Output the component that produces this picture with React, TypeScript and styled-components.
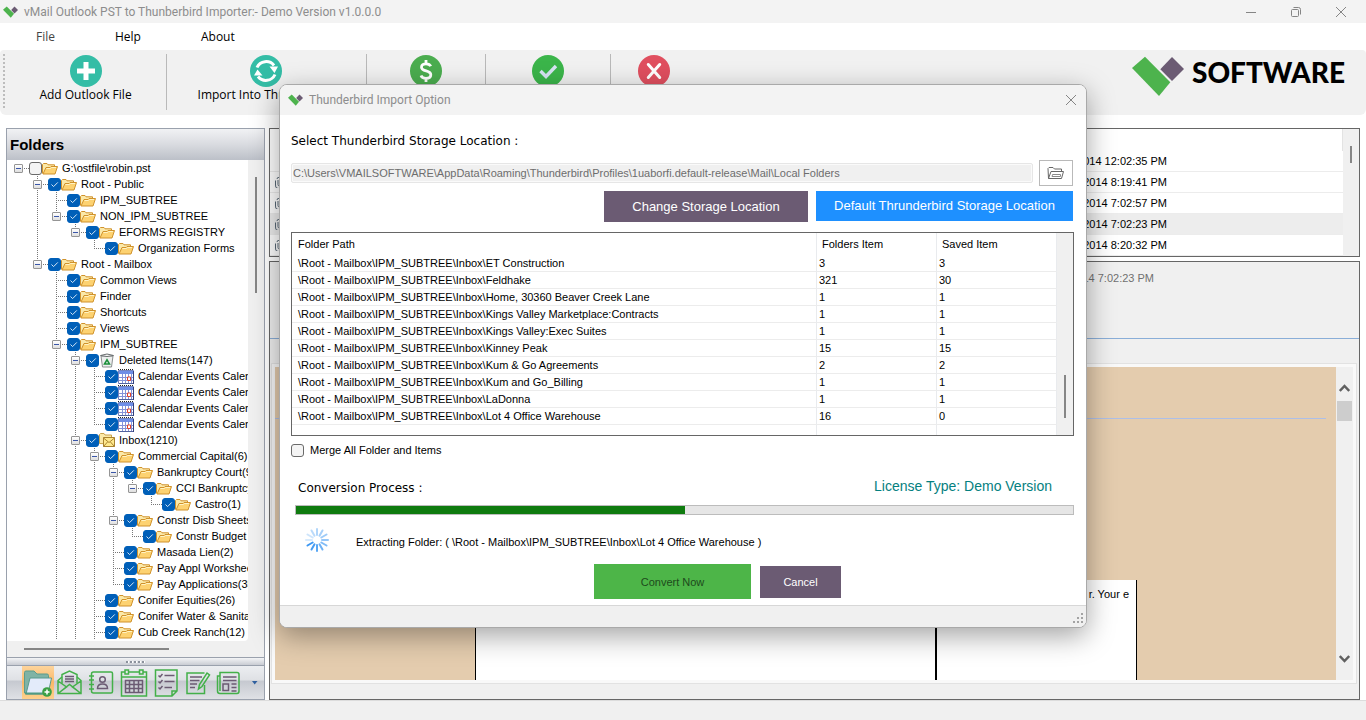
import React from "react";
import styled, { createGlobalStyle } from "styled-components";

const ui = `"Open Sans", "Noto Sans", sans-serif`;
const caption = `Roboto, "Noto Sans", sans-serif`;
const sans = `"Liberation Sans", Arial, sans-serif`;
const wide = `"DejaVu Sans", Verdana, sans-serif`;

const GlobalStyle = createGlobalStyle`
  *, *::before, *::after { box-sizing: border-box; }
  body { margin: 0; background: #fff; color: #000; font: 11px/16px ${sans}; }
  button { font: inherit; color: inherit; padding: 0; margin: 0; border: 0; background: none; cursor: pointer; }
  svg { display: block; flex: none; }
`;

/* ---------- window shell ---------- */

const Window = styled.div`
  position: relative;
  display: flex;
  flex-direction: column;
  min-height: 100vh;
`;

const TitleBar = styled.header<{ $tall?: boolean }>`
  display: flex;
  align-items: center;
  flex: none;
  height: ${(p) => (p.$tall ? 30 : 23)}px;
  padding: 0 3px;
  background: #f3f3f3;
  color: #8d8d8d;
  font: 12px/16px ${caption};
`;

const TitleText = styled.h1`
  flex: 1;
  margin: 0 0 0 6px;
  font: inherit;
`;

const WindowButton = styled.button`
  display: grid;
  place-items: center;
  width: 45px;
  height: 22px;
`;

const MenuBar = styled.nav`
  display: flex;
  align-items: center;
  gap: 60px;
  flex: none;
  height: 27px;
  padding: 0 36px;
  font: 12px/16px ${ui};
`;

const MenuItem = styled.button<{ $dim?: boolean }>`
  color: ${(p) => (p.$dim ? "#444" : "#000")};
`;

const Toolbar = styled.div`
  display: flex;
  align-items: flex-start;
  flex: none;
  height: 65px;
  padding: 4px 21px 0 3px;
  background: #f1f1f1;
  border-radius: 4px 4px 6px 6px;
`;

const Grip = styled.span`
  width: 2px;
  height: 55px;
  margin-right: 1px;
  background: repeating-linear-gradient(#bdbdbd 0 2px, transparent 2px 4px);
`;

const ToolButton = styled.button<{ $width: number; $last?: boolean }>`
  display: flex;
  flex-direction: column;
  align-items: center;
  flex: none;
  width: ${(p) => p.$width}px;
  height: 56px;
  padding: 1px 1px 0 0;
  border-right: 1px solid ${(p) => (p.$last ? "transparent" : "#b9b9b9")};
  font: 12px/16px ${ui};
  white-space: nowrap;
`;

const Brand = styled.div`
  display: flex;
  align-items: flex-start;
  gap: 8px;
  margin: 2px 0 0 auto;
  font: 900 28px/33px Lato, sans-serif;
`;

const Workspace = styled.main`
  display: flex;
  flex: 1;
  gap: 4px;
  padding: 13px 6px 0;
`;

const StatusBar = styled.footer`
  flex: none;
  height: 20px;
  background: #f0f0f0;
  border-top: 1px solid #dcdcdc;
`;

/* ---------- folder panel ---------- */

const Sidebar = styled.aside`
  display: flex;
  flex-direction: column;
  flex: none;
  width: 259px;
  border: 1px solid #9aa1ad;
  background: #f0f0f0;
`;

const SidebarTitle = styled.h2`
  flex: none;
  margin: 0;
  padding: 0 3px;
  background: linear-gradient(#f1f2f4, #d9dbe0 50%, #bcc0c8);
  font: bold 15px/31px ${sans};
`;

const TreeArea = styled.div`
  display: flex;
  flex: 1;
`;

const Tree = styled.ul`
  flex: 1;
  min-width: 0;
  margin: 0;
  padding: 0 0 1px 1px;
  overflow: hidden;
  list-style: none;
  background: #fff;
  border-radius: 0 0 4px 0;
`;

const TreeRow = styled.li`
  display: flex;
  align-items: center;
  height: 16px;
  white-space: nowrap;
`;

const vDots = "repeating-linear-gradient(#777 0 1px, transparent 1px 2px)";
const hDots = "repeating-linear-gradient(90deg, #777 0 1px, transparent 1px 2px)";

const Guide = styled.span<{ $on: boolean }>`
  flex: none;
  width: 19px;
  height: 16px;
  background: ${(p) => (p.$on ? `${vDots} 10px 0 / 1px 16px no-repeat` : "none")};
`;

const Branch = styled.span<{ $up: boolean; $down: boolean }>`
  display: flex;
  align-items: center;
  flex: none;
  width: 21px;
  height: 16px;
  padding-left: 6px;
  background: ${(p) =>
    [
      `${hDots} 10px 8px / 11px 1px no-repeat`,
      p.$up && `${vDots} 10px 0 / 1px 8px no-repeat`,
      p.$down && `${vDots} 10px 8px / 1px 8px no-repeat`,
    ]
      .filter(Boolean)
      .join(", ")};
`;

const Expander = styled.button`
  width: 9px;
  height: 9px;
  margin-top: 1px;
  border: 1px solid #959595;
  border-radius: 1px;
  background: linear-gradient(#3a56a8, #3a56a8) center / 5px 1px no-repeat, linear-gradient(#fff, #dfdfdf);
`;

const Tick = styled.input`
  appearance: none;
  flex: none;
  width: 13px;
  height: 13px;
  margin: 0;
  border: 1px solid #6a6a6a;
  border-radius: 3px;
  background: #f4f4f4;
  &:checked {
    border-color: #005fb8;
    background: #005fb8
      url("data:image/svg+xml,%3Csvg xmlns='http://www.w3.org/2000/svg' viewBox='0 0 11 11'%3E%3Cpath d='M2.5 5.5 4.6 7.6 8.8 3.4' fill='none' stroke='%23d5e6f6' stroke-width='1'/%3E%3C/svg%3E");
  }
`;

const TreeLabel = styled.label`
  display: flex;
  align-items: center;
  gap: 4px;
`;

const TrackV = styled.div`
  flex: none;
  width: 16px;
  background: #f0f0f0;
`;

const Thumb = styled.div<{ $top: number; $length: number }>`
  width: 2px;
  height: ${(p) => p.$length}px;
  margin: ${(p) => p.$top}px 0 0 7px;
  background: #868686;
`;

const TrackH = styled.div`
  flex: none;
  height: 16px;
  padding: 7px 0 0 17px;
`;

const ThumbH = styled.div`
  width: 145px;
  height: 2px;
  background: #868686;
`;

const Splitter = styled.div`
  display: flex;
  justify-content: center;
  flex: none;
  height: 9px;
  padding-top: 3px;
  border: solid #9aa1ad;
  border-width: 1px 0;
  background: linear-gradient(#f3f4f6, #c9ccd3);
`;

const SplitterDots = styled.span`
  width: 19px;
  height: 2px;
  background: repeating-linear-gradient(90deg, #8b919c 0 2px, #fff 2px 3px, transparent 3px 4px);
`;

const ModeStrip = styled.div`
  display: flex;
  align-items: center;
  flex: none;
  height: 33px;
  padding-left: 15px;
  background: linear-gradient(#eceef1, #dfe1e5 42%, #c6c9d0 46%, #dfe1e5);
`;

const ModeButton = styled.button<{ $active?: boolean }>`
  display: grid;
  place-items: center;
  width: 32px;
  height: 33px;
  background: ${(p) => (p.$active ? "linear-gradient(#fdd49c, #fbb868 50%, #fdd08c)" : "none")};
`;

/* ---------- right side ---------- */

const Content = styled.div`
  display: flex;
  flex-direction: column;
  flex: 1;
  gap: 4px;
  min-width: 0;
`;

const ListPanel = styled.section`
  display: flex;
  flex: none;
  height: 129px;
  border: 1px solid #666;
  overflow: hidden;
`;

const MessageTable = styled.table`
  flex: 1;
  align-self: flex-start;
  border-collapse: separate;
  border-spacing: 0;
  table-layout: fixed;
  th {
    height: 22px;
    padding: 0;
    border-right: 1px solid #e3e3e3;
  }
  th:nth-child(-n + 2) { border: 0; }
  td {
    height: 21px;
    padding: 0 0 0 5px;
    border-bottom: 1px solid #ececec;
  }
  td:nth-child(2) {
    padding: 0;
    text-align: right;
  }
`;

const MessageRow = styled.tr<{ $selected?: boolean }>`
  background: ${(p) => (p.$selected ? "#ededed" : "#fff")};
`;

const ReaderPanel = styled.section`
  display: flex;
  flex-direction: column;
  flex: 1;
  border: 1px solid #666;
  background: #f0f0f0;
`;

const ReaderHead = styled.div`
  display: flex;
  justify-content: flex-end;
  align-items: flex-start;
  flex: none;
  height: 77px;
  padding: 8px 205px 0 7px;
  border-bottom: 1px solid #8aaed8;
  color: #707070;
`;

const ReaderFrame = styled.div`
  display: flex;
  flex: 1;
  margin: 24px 2px 15px 1px;
  padding: 3px;
  border: 1px solid #e2e2e2;
  background: #f9f9f9;
`;

const Page = styled.div`
  display: flex;
  flex-direction: column;
  flex: 1;
  background: #e4ccae;
`;

const PageRule = styled.hr`
  width: calc(100% - 10px);
  margin: 51px 0 161px;
  border: 0;
  border-top: 1px solid #adbfe8;
`;

const Letter = styled.div`
  display: grid;
  grid-template-columns: 461px 1fr;
  flex: 1;
  margin: 0 199px 0 200px;
  border: solid #000;
  border-width: 0 1px;
  background: #fff;
`;

const LetterCell = styled.div<{ $rule?: boolean }>`
  padding: 6px 7px;
  border-right: ${(p) => (p.$rule ? "2px solid #000" : "0")};
  text-align: right;
`;

const PageScroll = styled.div`
  display: flex;
  flex-direction: column;
  align-items: center;
  flex: none;
  width: 17px;
  padding: 17px 0;
  background: #f0f0f0;
`;

const PageThumb = styled.div`
  width: 15px;
  height: 20px;
  margin: 8px 0 auto;
  background: #cdcdcd;
`;

/* ---------- dialog ---------- */

const DialogLayer = styled.div`
  position: absolute;
  inset: 84px 0 auto;
  display: flex;
  justify-content: center;
`;

const Dialog = styled.section`
  display: flex;
  flex-direction: column;
  width: 808px;
  max-width: 100%;
  overflow: hidden;
  border: 1px solid #a9a9a9;
  border-radius: 8px;
  background: #fff;
  box-shadow: 0 8px 28px rgba(0, 0, 0, 0.36);
`;

const DialogTitle = styled(TitleBar)`
  padding: 0 0 0 8px;
`;

const DialogClose = styled(WindowButton)`
  width: 30px;
`;

const DialogBody = styled.div`
  display: flex;
  flex-direction: column;
  padding: 18px 12px 6px 11px;
`;

const FieldLabel = styled.label`
  font: 12px/16px ${wide};
`;

const PathRow = styled.div`
  display: flex;
  align-items: center;
  gap: 6px;
  margin-top: 11px;
  padding-right: 1px;
`;

const PathBox = styled.input`
  flex: 1;
  height: 20px;
  padding: 0 1px;
  border: 1px solid #e6e6e6;
  border-radius: 2px;
  outline: 0;
  background: #f0f0f0;
  box-shadow: inset 0 0 0 1px #fafafa;
  color: #6d6d6d;
  font: 11px/16px ${sans};
`;

const BrowseButton = styled.button`
  display: grid;
  place-items: center;
  width: 34px;
  height: 26px;
  border: 1px solid #b9b9b9;
  background: #fff;
`;

const ButtonRow = styled.div<{ $bottom?: boolean }>`
  display: flex;
  align-items: ${(p) => (p.$bottom ? "center" : "flex-start")};
  justify-content: ${(p) => (p.$bottom ? "center" : "flex-end")};
  gap: ${(p) => (p.$bottom ? 9 : 8)}px;
  margin-top: ${(p) => (p.$bottom ? 12 : 5)}px;
  padding: ${(p) => (p.$bottom ? "0 0 0 70px" : "0 1px 0 0")};
`;

const FlatButton = styled.button<{ $w: number; $h: number; $bg: string; $ink?: string; $large?: boolean }>`
  width: ${(p) => p.$w}px;
  height: ${(p) => p.$h}px;
  background: ${(p) => p.$bg};
  color: ${(p) => p.$ink ?? "#fff"};
  font-size: ${(p) => (p.$large ? 13 : 11)}px;
`;

const PathListBox = styled.div`
  display: flex;
  height: 204px;
  margin-top: 10px;
  overflow: hidden;
  border: 1px solid #666;
`;

const PathTable = styled.table`
  flex: 1;
  align-self: flex-start;
  border-collapse: separate;
  border-spacing: 0;
  table-layout: fixed;
  th,
  td {
    border-right: 1px solid #e9ebee;
    text-align: left;
    white-space: nowrap;
    font-weight: normal;
  }
  th {
    height: 22px;
    padding: 0 0 1px 5px;
  }
  td {
    height: 17px;
    padding: 1px 0 0 2px;
    border-bottom: 1px solid #ececec;
    line-height: 15px;
  }
  th:first-child,
  td:first-child { padding-left: 6px; }
`;

const CheckRow = styled.label`
  display: flex;
  align-items: center;
  gap: 6px;
  margin-top: 6px;
`;

const ProcessHead = styled.div`
  display: flex;
  justify-content: space-between;
  margin-top: 20px;
  padding: 0 22px 0 7px;
`;

const ProcessLabel = styled.label`
  padding-top: 2px;
  font: 12px/16px ${wide};
`;

const License = styled.span`
  color: #058080;
  font-size: 14px;
`;

const ProgressBar = styled.progress`
  appearance: none;
  align-self: stretch;
  width: auto;
  height: 10px;
  margin: 9px 0 0 4px;
  border: 1px solid #bcbcbc;
  background: #e6e6e6;
  &::-webkit-progress-bar { background: #e6e6e6; }
  &::-webkit-progress-value { background: #0f7b0f; }
`;

const StateRow = styled.div`
  display: flex;
  align-items: center;
  gap: 27px;
  margin-top: 13px;
  padding-left: 14px;
`;

const StateText = styled.span`
  padding-top: 4px;
`;

const DialogFoot = styled.footer`
  display: flex;
  align-items: flex-end;
  justify-content: flex-end;
  height: 22px;
  padding: 0 3px 3px 0;
  border-top: 1px solid #d7d7d7;
  background: #f0f0f0;
`;

/* ---------- drawings ---------- */

const Mark = ({ w, h }: { w: number; h: number }) => (
  <svg width={w} height={h} viewBox="0 0 52 40" aria-hidden="true">
    <path d="M0 12 13 .7 38.300 26.300 27 40Z" fill="#4db34d" />
    <path d="M28.300 13.300 40 1 52 13 40 25Z" fill="#6b5b73" />
  </svg>
);

const CloseGlyph = () => (
  <svg width="10" height="10" viewBox="0 0 10 10" stroke="#858585" fill="none">
    <path d="M0 0 10 10M10 0 0 10" />
  </svg>
);

const AddIcon = () => (
  <svg width="32" height="32" viewBox="0 0 32 32">
    <circle cx="16" cy="16" r="16" fill="#34bda6" />
    <path d="M13.500 7h5v6.500H25v5h-6.500V25h-5v-6.500H7v-5h6.500Z" fill="#fff" />
  </svg>
);

const SyncIcon = () => (
  <svg width="32" height="32" viewBox="0 0 32 32">
    <circle cx="16" cy="16" r="16" fill="#34bda6" />
    <path d="M7 12.500A10 10 0 0 1 24 10.500M25 19.500A10 10 0 0 1 8 21.500" fill="none" stroke="#fff" strokeWidth="3" />
    <path d="M19.500 11.500H28L24.500 18ZM12.500 20.500H4L7.500 14.500Z" fill="#fff" />
  </svg>
);

const DollarIcon = () => (
  <svg width="32" height="32" viewBox="0 0 32 32">
    <circle cx="16" cy="16" r="16" fill="#4bad4f" />
    <path d="M20.700 11.300C20 9.500 18.300 8.800 16 8.800c-2.700 0-4.500 1.300-4.500 3.400 0 4.800 9.300 2.700 9.300 7.500 0 2.200-2 3.600-4.800 3.600-2.500 0-4.300-1-5-2.900M16 5v4M16 23v4" fill="none" stroke="#fff" strokeWidth="2.800" />
  </svg>
);

const DoneIcon = () => (
  <svg width="32" height="32" viewBox="0 0 32 32">
    <circle cx="16" cy="16" r="16" fill="#3bb54a" />
    <path d="M8.500 16 14 21.500 24 11" fill="none" stroke="#d6e4f2" strokeWidth="3.400" />
  </svg>
);

const ExitIcon = () => (
  <svg width="32" height="32" viewBox="0 0 32 32">
    <circle cx="16" cy="16" r="16" fill="#e04f5f" />
    <path d="M10.300 9.500 21.700 22.500M21.700 9.500 10.300 22.500" stroke="#fff" strokeWidth="3" strokeLinecap="round" />
  </svg>
);

const FolderIcon = () => (
  <svg width="16" height="13" viewBox="0 0 16 13">
    <path d="M.5 11.500V2.500L1.500 1.500H5L6 2.800h6.500V5" fill="#fbe9a9" stroke="#d0922c" />
    <path d="M1 12 4 5.500h4l1-1h6.500L13 12Z" fill="#fdd271" stroke="#d0922c" />
    <path d="M4.500 6.500h4l1-1H14" stroke="#fff3c4" fill="none" />
  </svg>
);

const BinIcon = () => (
  <svg width="16" height="15" viewBox="0 0 16 15">
    <path d="M2 3h12l-1.500 11H3.500Z" fill="#eceeee" stroke="#8b8f90" />
    <path d="M1.500 2.500Q8-.5 14.500 2.500 8 4.500 1.500 2.500Z" fill="#fff" stroke="#666b6d" />
    <path d="M5.500 11 8 6.800 10.500 11Z" fill="none" stroke="#1b8f3a" strokeWidth="1.500" />
  </svg>
);

const CalendarIcon = () => (
  <svg width="16" height="15" viewBox="0 0 16 15">
    <path d="M.5 1.500h15v13H.5Z" fill="#fff" stroke="#7383bf" />
    <path d="M1 2h14v3H1Z" fill="#6f8ee6" />
    <path d="M0 .5h16" stroke="#222" strokeDasharray="1 1" />
    <path d="M1 8.500h14M1 11.500h14M4.500 5v9M7.500 5v9M10.500 5v9M13.500 5v9" stroke="#8593d8" />
    <path d="M9.500 8h3v3.500h-3Z" fill="#fff" stroke="#e2442c" />
    <path d="M15.500 2v13H1" stroke="#33407c" fill="none" />
  </svg>
);

const InboxIcon = () => (
  <svg width="16" height="14" viewBox="0 0 16 14">
    <path d="M.5 10.500V1.500L1.500.5H5L6 2h6.500v9Z" fill="#fbe9a9" stroke="#c9a34a" />
    <path d="M4.500 4.500h11v9h-11Z" fill="#ffe98c" stroke="#a98230" />
    <path d="M4.500 5 10 9.500 15.500 5M4.500 13.500 8.500 9M15.500 13.500 11.500 9" fill="none" stroke="#a98230" />
  </svg>
);

const ClipIcon = () => (
  <svg width="9" height="11" viewBox="0 0 9 11" fill="none" stroke="#5a6a78">
    <path d="M3 3v4.500a1.500 1.500 0 0 0 3 0V2.500a2 2 0 0 0-4-.5M.5 3.500V8a3 3 0 0 0 6 1" />
  </svg>
);

const OpenFolderIcon = () => (
  <svg width="18" height="14" viewBox="0 0 18 14" fill="none" stroke="#666">
    <path d="M1.500 12.500 1 2.500 2 1.500H6L7.500 3H14.500V5.500M1.500 12.500 4 5.500H16.500L14.500 12.500Z" />
    <path d="M5.500 8.500H13.500V10.500H5Z" stroke="#8a8a8a" />
  </svg>
);

const Spinner = () => (
  <svg width="24" height="24" viewBox="0 0 24 24" stroke="#3d98f3" strokeWidth="2" strokeLinecap="round" role="img" aria-label="Working">
    {[0.4, 0.45, 0.5, 0.55, 0.65, 0.75, 0.85, 0.95, 1, 0.2, 0.25, 0.35].map((o, i) => (
      <path key={i} d="M12 7V1" opacity={o} transform={`rotate(${i * 30} 12 12)`} />
    ))}
  </svg>
);

const SizeGrip = () => (
  <svg width="11" height="11" viewBox="0 0 11 11" fill="#a3a3a3">
    <path d="M9 0h2v2H9ZM5 4h2v2H5ZM9 4h2v2H9ZM1 8h2v2H1ZM5 8h2v2H5ZM9 8h2v2H9Z" />
  </svg>
);

const green = { fill: "none", stroke: "#43b049", strokeWidth: 1.5 };
const plum = { fill: "none", stroke: "#6b5b73", strokeWidth: 1.5 };

const modeIcons: [string, React.ReactNode][] = [
  [
    "New folder",
    <>
      <path d="M1.500 25V4.500Q1.500 3 3 3H11L14 6H24Q25.500 6 25.500 7.500V25Z" fill="#7fb3a5" stroke="#5d9c8c" />
      <path d="M3 26 7 10H28.500L25 26Z" fill="#e3ebfa" stroke="#5a9a8d" />
      <path d="M2 25.500H21" stroke="#4f9a83" strokeWidth="2" />
      <circle cx="24" cy="24" r="4.800" fill="#3ba045" />
      <path d="M24 21.500v5M21.500 24h5" stroke="#fff" strokeWidth="1.500" />
    </>,
  ],
  [
    "Mail",
    <>
      <path d="M7 9 3 12.500V25.500H26V12.500L22 9M3 13 11.500 19 3 25.500M26 13 17.500 19 26 25.500M3 25.500 14.500 16.500 26 25.500" {...green} />
      <path d="M7 15.500V6.500L14.500 3 22 6.500V15.500" {...green} />
      <path d="M10 8.500h9M10 11h9M10 13.500h9" {...plum} />
    </>,
  ],
  [
    "Contacts",
    <>
      <path d="M7.500 4H25Q26.500 4 26.500 5.500V23.500Q26.500 25 25 25H7.500Q5.500 25 5.500 23V6Q5.500 4 7.500 4Z" {...green} />
      <path d="M3 8h5M3 12h5M3 16.500h5M3 21h5" {...green} />
      <circle cx="16.500" cy="11.500" r="2.800" {...plum} />
      <path d="M11.500 20.500Q11.500 16 16.500 16T21.500 20.500Z" {...plum} />
    </>,
  ],
  [
    "Calendar",
    <g transform="translate(1 0)">
      <path d="M2.500 4H27.500V28H2.500ZM2.500 9H27.500" {...green} />
      <path d="M6 2h3.500v4H6ZM20.500 2H24v4h-3.500Z" {...green} fill="#e6e8eb" />
      <path d="M6.500 12.500H23.500V24.500H6.500ZM6.500 16.500H23.500M6.500 20.500H23.500M10.500 12.500V24.500M15 12.500V24.500M19.500 12.500V24.500" {...plum} />
    </g>,
  ],
  [
    "Tasks",
    <g transform="translate(1 0)">
      <path d="M4.500 2H26V23L21 28H4.500ZM21 28V23H26" {...green} />
      <path d="M13.500 7.500H23.500M13.500 13.500H23.500M13.500 19.500H21M7.500 7.500 9 9 11.500 6M7.500 13.500 9 15 11.500 12M7.500 19.500 9 21 11.500 18" {...plum} />
    </g>,
  ],
  [
    "Notes",
    <g transform="translate(3 0)">
      <path d="M20.500 5H3V25.500H20.500V17" {...green} />
      <path d="M14.500 21 15.500 16.500 23 5 25.500 7 18 18.500Z" {...green} />
      <path d="M6 9H18M6 12.500H15.500M6 16H13M6 19.500H11" {...plum} />
    </g>,
  ],
  [
    "Journal",
    <>
      <path d="M7 4.500H24Q26 4.500 26 6.500V23Q26 25.500 24 25.500H7Q4.500 25.500 4.500 23V8H7ZM7 4.500V23" {...green} />
      <path d="M10 9H23.500M10 12.500H23.500M18.500 16H23.500M18.500 19.500H23.500M18.500 23H23.500M10 16H15.500V22.500H10Z" {...plum} />
    </>,
  ],
];

/* ---------- data ---------- */

type Kind = "folder" | "bin" | "calendar" | "inbox";
type Node = { depth: number; label: string; kind?: Kind; open?: boolean };

const nodes: Node[] = [
  { depth: 0, label: "G:\\ostfile\\robin.pst", open: true },
  { depth: 1, label: "Root - Public", open: true },
  { depth: 2, label: "IPM_SUBTREE" },
  { depth: 2, label: "NON_IPM_SUBTREE", open: true },
  { depth: 3, label: "EFORMS REGISTRY", open: true },
  { depth: 4, label: "Organization Forms" },
  { depth: 1, label: "Root - Mailbox", open: true },
  { depth: 2, label: "Common Views" },
  { depth: 2, label: "Finder" },
  { depth: 2, label: "Shortcuts" },
  { depth: 2, label: "Views" },
  { depth: 2, label: "IPM_SUBTREE", open: true },
  { depth: 3, label: "Deleted Items(147)", kind: "bin", open: true },
  { depth: 4, label: "Calendar Events Calendar", kind: "calendar" },
  { depth: 4, label: "Calendar Events Calendar", kind: "calendar" },
  { depth: 4, label: "Calendar Events Calendar", kind: "calendar" },
  { depth: 4, label: "Calendar Events Calendar", kind: "calendar" },
  { depth: 3, label: "Inbox(1210)", kind: "inbox", open: true },
  { depth: 4, label: "Commercial Capital(6)", open: true },
  { depth: 5, label: "Bankruptcy Court(9)", open: true },
  { depth: 6, label: "CCI Bankruptcy", open: true },
  { depth: 7, label: "Castro(1)" },
  { depth: 5, label: "Constr Disb Sheets", open: true },
  { depth: 6, label: "Constr Budget" },
  { depth: 5, label: "Masada Lien(2)" },
  { depth: 5, label: "Pay Appl Worksheets" },
  { depth: 5, label: "Pay Applications(35)" },
  { depth: 4, label: "Conifer Equities(26)" },
  { depth: 4, label: "Conifer Water & Sanitation" },
  { depth: 4, label: "Cub Creek Ranch(12)" },
];

// Whether a guide line at this depth carries on below the given row.
const continues = (row: number, depth: number) => {
  for (let i = row + 1; i < nodes.length; i++) {
    if (nodes[i].depth === depth) return true;
    if (nodes[i].depth < depth) return false;
  }
  return depth >= 2 && depth <= 4;
};

const kindIcon: Record<Kind, React.ReactNode> = {
  folder: <FolderIcon />,
  bin: <BinIcon />,
  calendar: <CalendarIcon />,
  inbox: <InboxIcon />,
};

const dates = ["2014 12:02:35 PM", "2014 8:19:41 PM", "2014 7:02:57 PM", "2014 7:02:23 PM", "2014 8:20:32 PM"];

const base = "\\Root - Mailbox\\IPM_SUBTREE\\Inbox\\";
const paths: [string, number, number][] = [
  ["ET Construction", 3, 3],
  ["Feldhake", 321, 30],
  ["Home, 30360 Beaver Creek Lane", 1, 1],
  ["Kings Valley Marketplace:Contracts", 1, 1],
  ["Kings Valley:Exec Suites", 1, 1],
  ["Kinney Peak", 15, 15],
  ["Kum & Go Agreements", 2, 2],
  ["Kum and Go_Billing", 1, 1],
  ["LaDonna", 1, 1],
  ["Lot 4 Office Warehouse", 16, 0],
];

const tools: [string, number, React.ReactNode][] = [
  ["Add Outlook File", 161, <AddIcon />],
  ["Import Into Thunderbird", 200, <SyncIcon />],
  ["", 119, <DollarIcon />],
  ["", 125, <DoneIcon />],
  ["", 87, <ExitIcon />],
];

/* ---------- parts ---------- */

const FolderTree = () => (
  <Tree>
    {nodes.map((n, i) => (
      <TreeRow key={i}>
        {Array.from({ length: n.depth }, (_, d) => (
          <Guide key={d} $on={d > 0 && continues(i, d)} />
        ))}
        <Branch $up={n.depth > 0} $down={n.depth > 0 && continues(i, n.depth)}>
          {n.open && <Expander aria-label={`Collapse ${n.label}`} />}
        </Branch>
        <Tick type="checkbox" id={`node-${i}`} defaultChecked={i > 0} />
        <TreeLabel htmlFor={`node-${i}`}>
          {kindIcon[n.kind ?? "folder"]}
          {n.label}
        </TreeLabel>
      </TreeRow>
    ))}
  </Tree>
);

const ImportDialog = () => (
  <DialogLayer>
    <Dialog role="dialog" aria-labelledby="dialog-title">
      <DialogTitle $tall>
        <Mark w={15} h={12} />
        <TitleText id="dialog-title" as="h2">Thunderbird Import Option</TitleText>
        <DialogClose aria-label="Close dialog"><CloseGlyph /></DialogClose>
      </DialogTitle>
      <DialogBody>
        <FieldLabel htmlFor="location">Select Thunderbird Storage Location :</FieldLabel>
        <PathRow>
          <PathBox
            id="location"
            readOnly
            value={"C:\\Users\\VMAILSOFTWARE\\AppData\\Roaming\\Thunderbird\\Profiles\\1uaborfi.default-release\\Mail\\Local Folders"}
          />
          <BrowseButton aria-label="Browse"><OpenFolderIcon /></BrowseButton>
        </PathRow>
        <ButtonRow>
          <FlatButton $w={204} $h={31} $bg="#6b5b73" $large>Change Storage Location</FlatButton>
          <FlatButton $w={257} $h={30} $bg="#1e90ff" $large>Default Thrunderbird Storage Location</FlatButton>
        </ButtonRow>
        <PathListBox>
          <PathTable>
            <colgroup>
              <col />
              <col width="120" />
              <col width="120" />
            </colgroup>
            <thead>
              <tr><th>Folder Path</th><th>Folders Item</th><th>Saved Item</th></tr>
            </thead>
            <tbody>
              {paths.map(([name, total, saved]) => (
                <tr key={name}><td>{base + name}</td><td>{total}</td><td>{saved}</td></tr>
              ))}
              <tr><td /><td /><td /></tr>
            </tbody>
          </PathTable>
          <TrackV><Thumb $top={142} $length={43} /></TrackV>
        </PathListBox>
        <CheckRow><Tick type="checkbox" />Merge All Folder and Items</CheckRow>
        <ProcessHead>
          <ProcessLabel htmlFor="progress">Conversion Process :</ProcessLabel>
          <License>License Type: Demo Version</License>
        </ProcessHead>
        <ProgressBar id="progress" value={50} max={100} />
        <StateRow>
          <Spinner />
          <StateText>{`Extracting Folder: ( ${base}Lot 4 Office Warehouse )`}</StateText>
        </StateRow>
        <ButtonRow $bottom>
          <FlatButton $w={157} $h={35} $bg="#4db548" $ink="#1d4a1c">Convert Now</FlatButton>
          <FlatButton $w={81} $h={32} $bg="#6b5b73">Cancel</FlatButton>
        </ButtonRow>
      </DialogBody>
      <DialogFoot><SizeGrip /></DialogFoot>
    </Dialog>
  </DialogLayer>
);

export default function App() {
  return (
    <Window>
      <GlobalStyle />
      <TitleBar>
        <Mark w={15} h={12} />
        <TitleText>vMail Outlook PST to Thunberbird Importer:- Demo Version v1.0.0.0</TitleText>
        <WindowButton aria-label="Minimize">
          <svg width="10" height="10" stroke="#858585"><path d="M0 5.500H10" /></svg>
        </WindowButton>
        <WindowButton aria-label="Restore">
          <svg width="10" height="10" stroke="#858585" fill="none">
            <rect x=".5" y="2.500" width="7" height="7" rx="1" />
            <path d="M2.500 .5H7.500Q9.500 .5 9.500 2.500V7.500" />
          </svg>
        </WindowButton>
        <WindowButton aria-label="Close"><CloseGlyph /></WindowButton>
      </TitleBar>
      <MenuBar>
        <MenuItem $dim>File</MenuItem>
        <MenuItem>Help</MenuItem>
        <MenuItem>About</MenuItem>
      </MenuBar>
      <Toolbar>
        <Grip />
        {tools.map(([label, width, icon], i) => (
          <ToolButton key={i} $width={width} $last={i === tools.length - 1}>{icon}{label}</ToolButton>
        ))}
        <Brand><Mark w={52} h={40} />SOFTWARE</Brand>
      </Toolbar>
      <Workspace>
        <Sidebar>
          <SidebarTitle>Folders</SidebarTitle>
          <TreeArea>
            <FolderTree />
            <TrackV><Thumb $top={17} $length={116} /></TrackV>
          </TreeArea>
          <TrackH><ThumbH /></TrackH>
          <Splitter><SplitterDots /></Splitter>
          <ModeStrip>
            {modeIcons.map(([label, art], i) => (
              <ModeButton key={label} aria-label={label} $active={i === 0}>
                <svg width="30" height="30" viewBox="0 0 30 30">{art}</svg>
              </ModeButton>
            ))}
            <button aria-label="More views">
              <svg width="20" height="8" viewBox="0 0 20 8"><path d="M8 2h5.500L10.700 5.500Z" fill="#2f5f9f" /></svg>
            </button>
          </ModeStrip>
        </Sidebar>
        <Content>
          <ListPanel>
            <MessageTable>
              <colgroup>
                <col width="20" />
                <col width="877" />
                <col />
              </colgroup>
              <thead><tr><th /><th /><th /></tr></thead>
              <tbody>
                {dates.map((d, i) => (
                  <MessageRow key={d} $selected={i === 3}>
                    <td>{i > 0 && <ClipIcon />}</td>
                    <td>{d}</td>
                    <td />
                  </MessageRow>
                ))}
              </tbody>
            </MessageTable>
            <TrackV><Thumb $top={17} $length={17} /></TrackV>
          </ListPanel>
          <ReaderPanel>
            <ReaderHead>2014 7:02:23 PM</ReaderHead>
            <ReaderFrame>
              <Page>
                <PageRule />
                <Letter>
                  <LetterCell $rule />
                  <LetterCell>r. Your e</LetterCell>
                </Letter>
              </Page>
              <PageScroll>
                <svg width="11" height="9" viewBox="0 0 11 9" fill="none" stroke="#606060" strokeWidth="2.500"><path d="M.8 7 5.500 2 10.200 7" /></svg>
                <PageThumb />
                <svg width="11" height="9" viewBox="0 0 11 9" fill="none" stroke="#606060" strokeWidth="2.500"><path d="M.8 2 5.500 7 10.200 2" /></svg>
              </PageScroll>
            </ReaderFrame>
          </ReaderPanel>
        </Content>
      </Workspace>
      <StatusBar />
      <ImportDialog />
    </Window>
  );
}
